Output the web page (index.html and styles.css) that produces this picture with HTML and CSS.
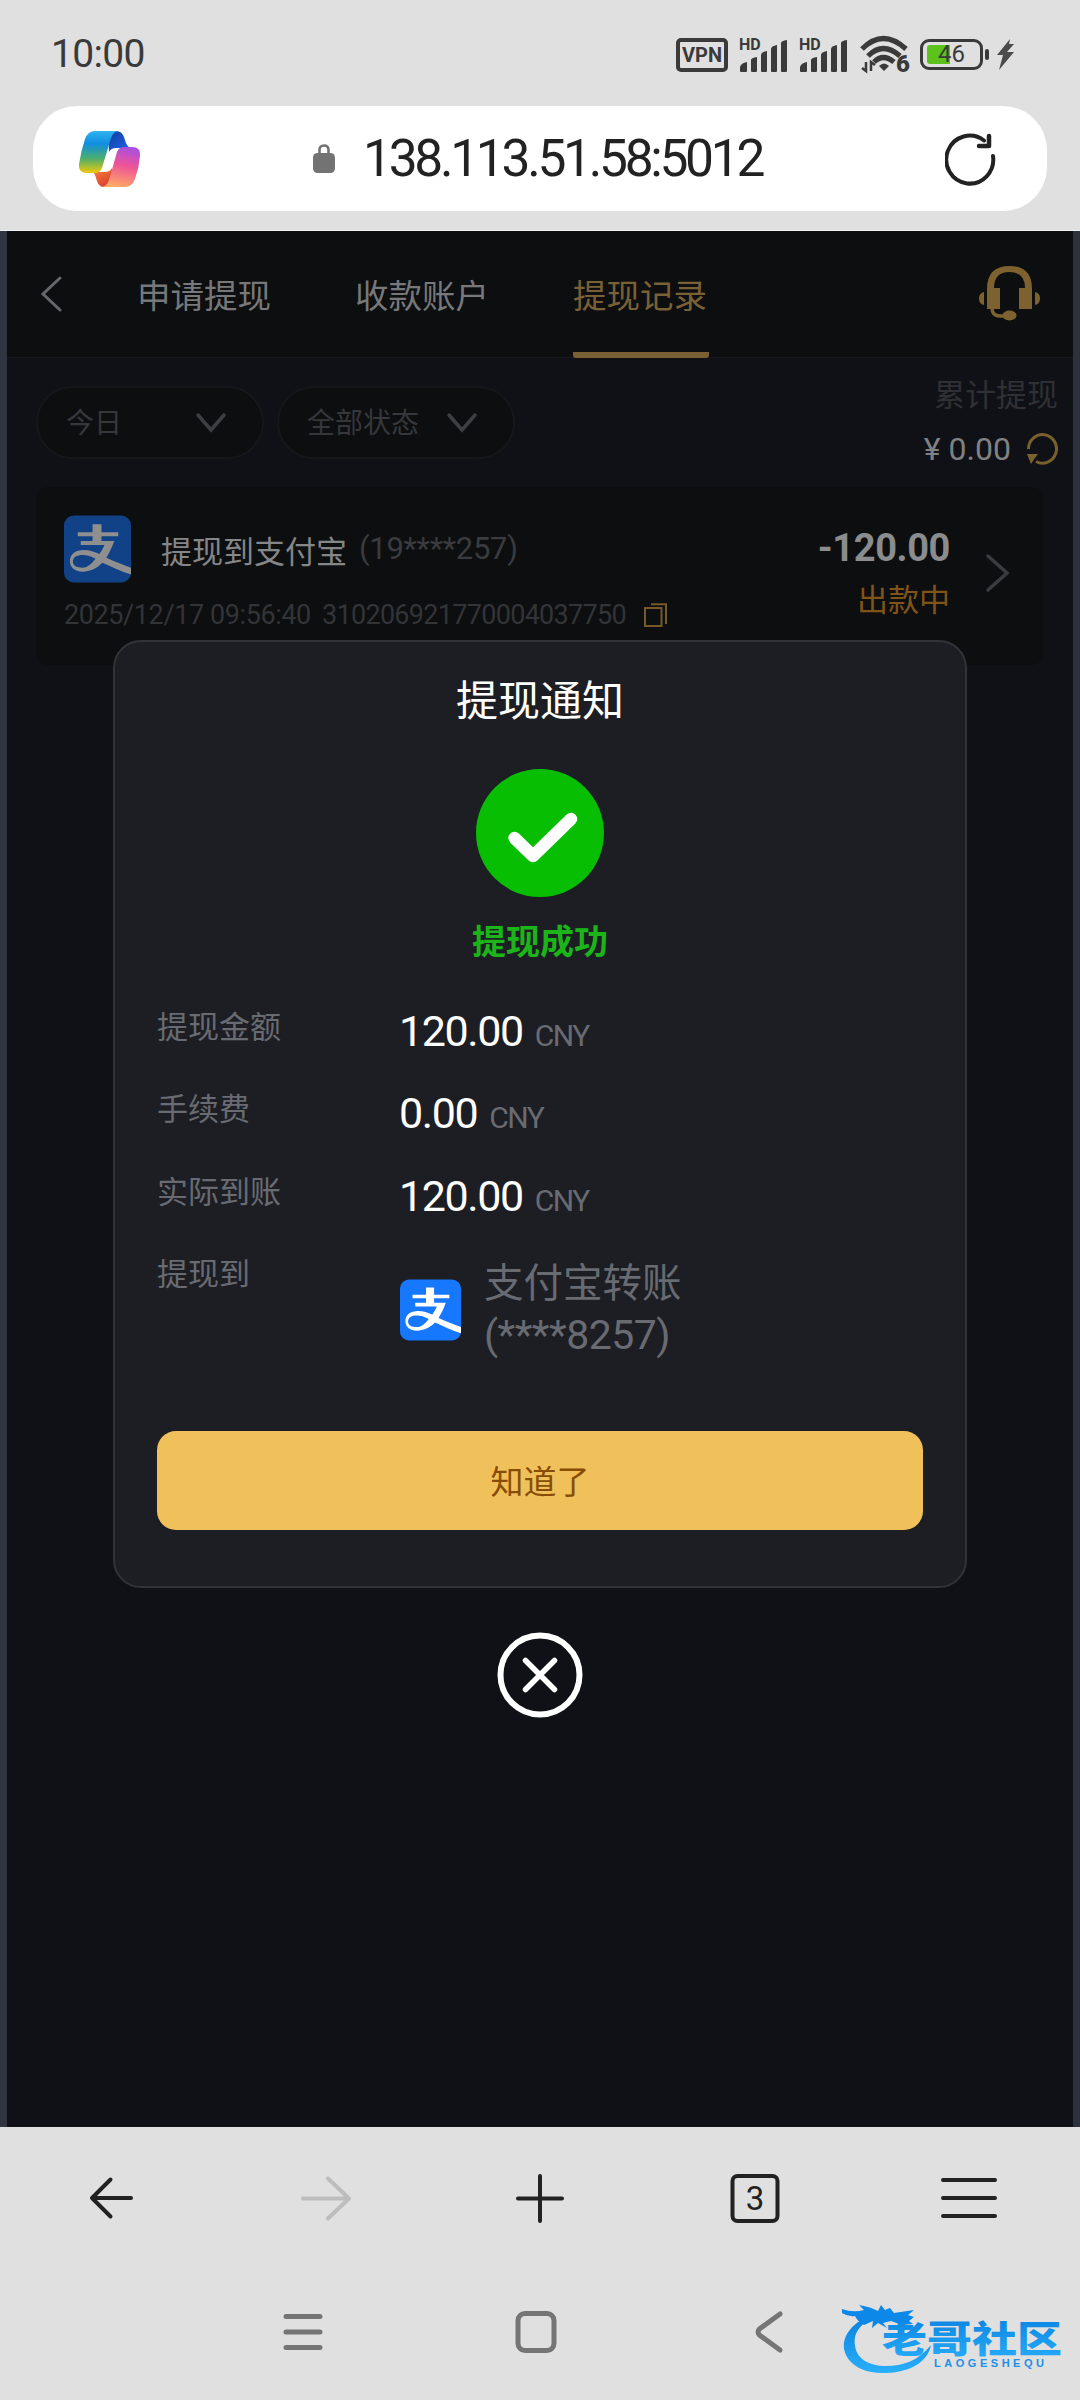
FILE: index.html
```html
<!DOCTYPE html>
<html lang="zh-CN">
<head>
<meta charset="utf-8">
<title>提现记录</title>
<link rel="stylesheet" href="styles.css">
</head>
<body>
<svg class="defs" aria-hidden="true">
  <symbol id="alipay" viewBox="0 0 68 68">
    <rect class="tile" width="68" height="68" rx="10"/>
    <path class="glyph" d="M29 9h9v8h17v4H38v5h13c-2 6-4.500 11-8 17 8 3.500 17 7.500 25 10v7c-10-3-20-8-29-12C33 54 26 57 19 57 11 57 6 53 6 46s6-11 14-11c6 0 11 2 16 4 2-3 4-6 5-9H17v-4h12v-5H14v-4h15zM32 44c-5-3-9-4-13-4-6 0-10 2-10 7 0 4 4 6 10 6 5 0 9-4 13-9z"/>
  </symbol>
  <symbol id="signal" viewBox="0 0 50 34">
    <path d="M2 33v-4q1-4 7-5v9q0 1-1 1H3q-1 0-1-1zM13 33V22q0-2 6-3v14q0 1-1 1h-4q-1 0-1-1zM23 33V17q0-3 6-4v20q0 1-1 1h-4q-1 0-1-1zM33 33V11q0-3 6-4v26q0 1-1 1h-4q-1 0-1-1zM43 33V5q0-2 6-3v31q0 1-1 1h-4q-1 0-1-1z"/>
  </symbol>
</svg>

<header class="chrome-top">
  <div class="status">
    <span class="clock">10:00</span>
    <div class="indicators">
      <span class="vpn">VPN</span>
      <span class="cell"><svg width="50" height="34"><use href="#signal"/></svg><b>HD</b></span>
      <span class="cell"><svg width="50" height="34"><use href="#signal"/></svg><b>HD</b></span>
      <svg class="wifi" width="50" height="40" viewBox="0 0 50 40">
        <g fill="none" stroke="#3a3a3a" stroke-width="5.200"><path d="M2 14Q23-7 46 14"/><path d="M8 21Q23 6 40 21"/><path d="M14 27Q23 18 34 27"/></g>
        <path d="M19 31q5-5 10 0l-5 5z" fill="#3a3a3a"/>
        <path d="M6 27v9l-4-3M11 36v-9l4 3" fill="none" stroke="#3a3a3a" stroke-width="2.500"/>
        <text x="36" y="37" class="six">6</text>
      </svg>
      <span class="battery"><i class="level"></i><em>46</em></span>
      <svg width="20" height="32" viewBox="0 0 20 32"><path d="M14 0 1 16h6L3 31 18 13h-7l7-8h-5z" fill="#4b4b4b"/></svg>
    </div>
  </div>
  <div class="address">
    <svg class="copilot" width="62" height="58" viewBox="0 0 62 58">
      <defs>
        <linearGradient id="cool" x1="0" y1="0" x2="0" y2="1"><stop offset="0" stop-color="#2fb4ee"/><stop offset=".3" stop-color="#108ee2"/><stop offset=".65" stop-color="#4bae6d"/><stop offset="1" stop-color="#f0ca0b"/></linearGradient>
        <linearGradient id="warm" x1=".6" y1="0" x2=".4" y2="1"><stop offset="0" stop-color="#a94fe0"/><stop offset=".45" stop-color="#ee5495"/><stop offset="1" stop-color="#ffa967"/></linearGradient>
        <linearGradient id="deep" x1="0" y1="0" x2="1" y2="1"><stop offset="0" stop-color="#143a9c"/><stop offset="1" stop-color="#1d6cf0"/></linearGradient>
        <linearGradient id="ember" x1="0" y1="0" x2=".7" y2="1"><stop offset="0" stop-color="#ff8a3c"/><stop offset="1" stop-color="#d93f32"/></linearGradient>
      </defs>
      <path d="M29 1h8q6 0 8 6l2 6q2 5 6 5H37q-5 0-7 4z" fill="url(#deep)"/>
      <path d="M33 57h-8q-5 0-7-6l-2-6q-1-3-5-3h15q5 0 7-4z" fill="url(#ember)"/>
      <path d="M16 1h23q-5 1-7 7L23 38q-2 5-7 5H8q-9 0-8-9 2-13 6-25Q9 1 16 1z" fill="url(#cool)"/>
      <path d="M46 57H23q5-1 7-7l8-28q2-5 7-5h8q9 0 8 9-1 12-5 23-3 8-10 8z" fill="url(#warm)"/>
    </svg>
    <svg class="lock" width="22" height="29" viewBox="0 0 22 29"><rect y="9" width="22" height="20" rx="4.500" fill="#737373"/><path d="M6.500 11V6q0-4.500 4.500-4.500T15.500 6v5" fill="none" stroke="#737373" stroke-width="2.600"/></svg>
    <span class="url">138.113.51.58:5012</span>
    <svg class="reload" width="52" height="54" viewBox="0 0 52 54"><path d="M48 24A23.500 24 0 1 1 39 8.500" fill="none" stroke="#222" stroke-width="4" stroke-linecap="round"/><path d="M44 4v10H34" fill="none" stroke="#222" stroke-width="4.500" stroke-linecap="round" stroke-linejoin="round"/></svg>
  </div>
</header>

<main class="page">
  <nav class="tabs">
    <svg class="back" width="24" height="40" viewBox="0 0 24 40"><path d="M21 4 4 20l17 16" fill="none" stroke="#65676a" stroke-width="3" stroke-linecap="round"/></svg>
    <span class="tab">申请提现</span>
    <span class="tab">收款账户</span>
    <span class="tab active">提现记录</span>
    <svg class="support" width="62" height="56" viewBox="0 0 62 56" fill="#7d612e">
      <path d="M8 43V23Q8 0 30.500 0T53 23v20H40V22h6Q46 6 30.500 6T15 22h6v21zM5 26v13Q0 38 0 32.500T5 26zM56 26v13q5-1 5-6.500T56 26z"/>
      <path d="M13 42q0 8 8 8h8" fill="none" stroke="#7d612e" stroke-width="3.500"/><ellipse cx="30.500" cy="49.500" rx="7" ry="5"/>
    </svg>
  </nav>

  <section class="toolbar">
    <div class="pill pill-day"><span>今日</span><svg width="32" height="22" viewBox="0 0 32 22"><path d="m3 3 13 15L29 3"/></svg></div>
    <div class="pill pill-state"><span>全部状态</span><svg width="32" height="22" viewBox="0 0 32 22"><path d="m3 3 13 15L29 3"/></svg></div>
    <div class="total">
      <div class="total-label">累计提现</div>
      <div class="total-value"><span class="yen">¥</span><span>0.00</span>
        <svg width="32" height="34" viewBox="0 0 32 34"><path d="M2.500 17A14 14.300 0 1 1 10 29.500" fill="none" stroke="#79602f" stroke-width="3"/><path d="M1 22h11l-3 4-4 6z" fill="#79602f"/></svg>
      </div>
    </div>
  </section>

  <article class="record">
    <div class="record-main">
      <div class="record-title">
        <svg class="pay dim" width="67" height="68" preserveAspectRatio="none"><use href="#alipay"/></svg>
        <span class="name">提现到支付宝</span><span class="acct">(19****257)</span>
      </div>
      <div class="record-meta">
        <span class="date">2025/12/17 09:56:40</span><span class="serial">310206921770004037750</span>
        <svg width="23" height="24" viewBox="0 0 23 24" fill="none" stroke="#75592b" stroke-width="2"><path d="M1 5h16.500v18H1zM7 1.200h15V21"/></svg>
      </div>
    </div>
    <div class="record-side">
      <div class="amount">-120.00</div>
      <div class="state">出款中</div>
    </div>
    <svg class="go" width="26" height="42" viewBox="0 0 26 42"><path d="m4 4 19 17L4 38" fill="none" stroke="#3b3c3f" stroke-width="3.500" stroke-linecap="round"/></svg>
  </article>

  <div class="overlay">
    <section class="dialog">
      <h1>提现通知</h1>
      <svg class="ok" width="128" height="128" viewBox="0 0 128 128"><circle cx="64" cy="64" r="64" fill="#07be02"/><path d="m38.500 69 18.500 18 38-37" fill="none" stroke="#fff" stroke-width="12.500" stroke-linecap="round" stroke-linejoin="round"/></svg>
      <p class="ok-text">提现成功</p>
      <dl>
        <dt>提现金额</dt><dd>120.00<small>CNY</small></dd>
        <dt>手续费</dt><dd>0.00<small>CNY</small></dd>
        <dt>实际到账</dt><dd>120.00<small>CNY</small></dd>
        <dt>提现到</dt>
        <dd class="target"><svg class="pay" width="61" height="62"><use href="#alipay"/></svg><div>支付宝转账<br><span class="digits">(****8257)</span></div></dd>
      </dl>
      <button>知道了</button>
    </section>
    <svg class="close" width="86" height="86" viewBox="0 0 86 86" fill="none" stroke="#fff"><circle cx="43" cy="43" r="39.500" stroke-width="6"/><path d="m28.500 28.500 29 29m0-29-29 29" stroke-width="5.500" stroke-linecap="round"/></svg>
  </div>
</main>

<footer class="chrome-bottom">
  <nav class="tools">
    <svg viewBox="0 0 60 60"><path d="M50 30H12M29.500 11.500 11 30l18.500 18.500"/></svg>
    <svg class="off" viewBox="0 0 60 60"><path d="M7 30.500h46M32 10.500l21 20-21 20"/></svg>
    <svg viewBox="0 0 60 60"><path d="M8 30.500h44M30 8v45"/></svg>
    <svg viewBox="0 0 60 60"><rect x="7.500" y="8" width="45" height="45" rx="5"/><text x="30" y="42">3</text></svg>
    <svg viewBox="0 0 60 60"><path d="M4 12h52M4 30h52M4 48h52"/></svg>
  </nav>
  <nav class="system">
    <svg width="42" height="44" viewBox="0 0 42 44"><path d="M4 6.500h34M4 22h34M4 37.500h34"/></svg>
    <svg width="42" height="44" viewBox="0 0 42 44"><rect x="3" y="3.500" width="36" height="37" rx="7"/></svg>
    <svg width="32" height="44" viewBox="0 0 32 44"><path d="M27 4 7 18.500q-4 3.500 0 7L27 40"/></svg>
  </nav>
  <svg class="watermark" width="232" height="80" viewBox="0 0 232 80">
    <defs><linearGradient id="blue" x1="0" y1="0" x2="0" y2="1"><stop offset="0" stop-color="#087ede"/><stop offset="1" stop-color="#29b0fa"/></linearGradient></defs>
    <path d="M34 14C12 22 2 36 4 49 8 67 27 74 47 73 70 72 88 62 91 45 78 61 63 66 46 66 28 66 16 58 15 45 13 32 22 22 35 18z" fill="url(#blue)"/>
    <path d="M2 9q11 4 22 1l-5-5q12 2 19 6l3-6 4 5 5-2 4 5 20-3-6 5 6 2-5 4 4 3-11 1-11-4-8 2 4 5-9-5-6 5 1-7-9 4q-7-4-9-9-7 1-13-3z" fill="#0c88e8"/>
    <g fill="url(#blue)" class="brand"><text x="42" y="53" textLength="180" lengthAdjust="spacingAndGlyphs">老哥社区</text></g>
    <text x="94" y="67" class="brand-en" textLength="110">LAOGESHEQU</text>
  </svg>
</footer>
</body>
</html>
```
FILE: styles.css
```css
* { box-sizing: border-box; margin: 0; padding: 0; }
body { width: 1080px; height: 2400px; background: #e0e0e0; font-family: "Noto Sans CJK SC", sans-serif; display: flex; flex-direction: column; overflow: hidden; }
svg { display: block; flex: none; }
.defs { position: absolute; width: 0; height: 0; }

.chrome-top { height: 231px; border-bottom: 1px solid #f2f4f4; }
.status { height: 106px; padding: 0 64px 0 51px; display: flex; justify-content: space-between; align-items: center; }
.clock { font: 400 39px/48px Roboto, sans-serif; color: #3a3a3a; letter-spacing: -.7px; padding-top: 2px; }
.indicators { display: flex; align-items: center; gap: 10px; color: #3a3a3a; fill: #3a3a3a; padding-top: 3px; }
.vpn { width: 52px; height: 34px; border: 4px solid #3a3a3a; border-radius: 5px; font: 700 20px/27px Roboto, sans-serif; text-align: center; }
.cell { position: relative; }
.cell b { position: absolute; left: 1px; top: 0; font: 700 16px/14px Roboto, sans-serif; }
.wifi { margin-left: 2px; }
.six { font: 900 24px Roboto, sans-serif; }
.battery { position: relative; width: 63px; height: 31px; border: 3px solid #3a3a3a; border-radius: 9px; font: 400 24px/25px Roboto, sans-serif; text-align: center; margin-right: 3px; }
.battery::after { content: ""; position: absolute; right: -9px; top: 7px; width: 4px; height: 11px; border-radius: 2px; background: #3a3a3a; }
.battery .level { position: absolute; left: 4px; top: 3px; width: 23px; height: 19px; border-radius: 3px 0 0 3px; background: #5cc31b; }
.battery em { position: relative; font-style: normal; }

.address { height: 105px; margin: 0 33px; border-radius: 44px; background: #fff; display: flex; align-items: center; padding: 0 50px 0 46px; }
.lock { margin: 0 28px 0 172px; }
.url { font: 400 51.500px/60px Roboto, sans-serif; color: #222; letter-spacing: -3.300px; flex: 1; white-space: nowrap; }

.page { position: relative; height: 1896px; background: #101116; border-left: 7px solid #303541; border-right: 7px solid #2b323d; }
.tabs { height: 127px; border-bottom: 1px solid #17181b; background: #0d0e10; display: flex; align-items: center; padding: 0 32px 0 32px; }
.tab { font-size: 33.500px; line-height: 126px; height: 127px; color: #77787a; margin-right: 84px; white-space: nowrap; }
.back { margin-right: 74px; }
.tab.active { color: #7a6135; border-bottom: 6px solid #7a6135; border-radius: 3px; margin: 0; width: 136px; position: relative; }
.support { margin-left: auto; }

.toolbar { height: 129px; display: flex; padding: 28px 15px 0 29px; }
.pill { height: 73px; border: 2px solid #15171a; border-radius: 37px; background: #0d0e10; display: flex; align-items: center; justify-content: space-between; color: #35373b; font-size: 28px; padding: 0 35px 0 28px; margin-right: 13px; }
.pill svg { fill: none; stroke: #3d3f43; stroke-width: 3.500; stroke-linecap: round; }
.pill span { line-height: 60px; margin-top: -4px; }
.pill-day { width: 228px; }
.pill-state { width: 238px; }
.total { margin-left: auto; margin-top: -15px; }
.total-label { font-size: 31px; line-height: 44px; color: #2e3034; text-align: right; }
.total-value { font: 400 32px/44px Roboto, sans-serif; color: #808183; display: flex; align-items: center; margin-top: 12px; justify-content: flex-end; }
.total-value svg { margin-left: 15px; }
.yen { margin-right: 8px; }

.record { height: 178px; margin: 0 30px 0 29px; background: #0d0e0f; border-radius: 12px; display: flex; padding: 28px 33px 0 28px; }
.record-main { flex: 1; }
.record-title { display: flex; align-items: center; height: 68px; white-space: nowrap; }
.pay .tile, .pay { color: #1677ff; }
.tile { fill: currentColor; }
.glyph { fill: #fff; }
.dim { filter: brightness(.56) saturate(.9); }
.name { font-size: 31px; color: #858688; margin-left: 30px; }
.acct { font: 400 31px/44px Roboto, sans-serif; color: #393b3f; margin-left: 12px; letter-spacing: -.3px; }
.record-meta { display: flex; align-items: center; height: 36px; margin-top: 14px; font: 400 27px/36px Roboto, sans-serif; color: #323438; white-space: nowrap; }
.date { width: 258px; letter-spacing: -.4px; }
.serial { width: 322px; letter-spacing: -.7px; }
.record-side { text-align: right; margin-right: 34px; }
.amount { font: 700 38px/48px Roboto, sans-serif; color: #8b8c8e; margin-top: 9px; letter-spacing: -.4px; }
.state { font-size: 31px; line-height: 44px; color: #805417; margin-top: 4px; }
.go { margin-top: 37px; }

.overlay { position: absolute; left: 106px; top: 409px; width: 854px; }
.dialog { height: 948px; border: 2px solid #313338; border-radius: 28px; background: #1d1e23; padding: 26px 42px 0; }
h1 { font-size: 42px; font-weight: 400; line-height: 60px; color: #fff; text-align: center; }
.ok { margin: 41px auto 0; }
.ok-text { font-size: 34px; font-weight: 700; line-height: 50px; color: #1bb51a; text-align: center; margin-top: 18px; }
dl { display: grid; grid-template-columns: 242px 1fr; grid-template-rows: 82.300px 82.300px 82.300px 140px; margin-top: 38px; }
dt { font-size: 31px; line-height: 44px; color: #686b72; }
dd { font: 400 43px/52px Roboto, sans-serif; letter-spacing: -1.400px; color: #fff; padding-top: 2px; }
dd small { font-size: 30px; color: #686b72; margin-left: 12px; letter-spacing: -1.500px; }
dd.target { display: flex; color: #686b72; font: 400 39.500px/52px "Noto Sans CJK SC", sans-serif; letter-spacing: 0; padding-top: 4px; }
.target .pay { margin: 25px 23px 0 1px; }
.target div { margin-top: 0; }
.digits { font-family: Roboto, sans-serif; font-size: 41px; letter-spacing: -.5px; }
button { display: block; width: 766px; height: 99px; border: 0; border-radius: 19px; background: #f0c15b; color: #874d05; font: 400 33px/90px "Noto Sans CJK SC", sans-serif; margin-top: 41px; }
.close { margin: 44px auto 0; }

.chrome-bottom { position: relative; height: 273px; }
.tools { height: 142px; display: flex; justify-content: space-between; align-items: center; padding: 0 81px; }
.tools svg { width: 60px; height: 60px; fill: none; stroke: #222; stroke-width: 4; stroke-linecap: round; stroke-linejoin: round; }
.tools .off { stroke: #bdbdbd; }
.tools text { font: 400 33px Roboto, sans-serif; fill: #222; stroke: none; text-anchor: middle; }
.system { display: flex; align-items: center; padding: 41px 0 0 282px; gap: 191px; fill: none; stroke: #757575; }
.system svg { stroke-width: 5; stroke-linecap: round; stroke-linejoin: round; }
.system svg:last-child { margin-left: 5px; }
.watermark { position: absolute; left: 840px; top: 173px; }
.brand { font: 900 37px "Noto Sans CJK SC", sans-serif; }
.brand-en { font: 700 11px "Liberation Sans", sans-serif; fill: #1b91ea; }
```
